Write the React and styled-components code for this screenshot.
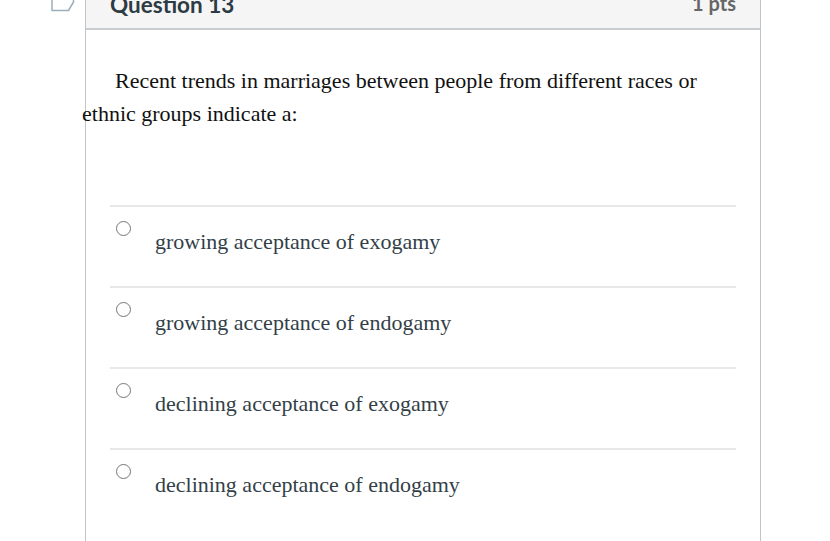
import styled, { createGlobalStyle } from "styled-components";

const GlobalStyle = createGlobalStyle`
  html, body {
    margin: 0;
    padding: 0;
    background: #ffffff;
    overflow: hidden;
  }
`;

const answers = [
  "growing acceptance of exogamy",
  "growing acceptance of endogamy",
  "declining acceptance of exogamy",
  "declining acceptance of endogamy",
];

export default function App() {
  return (
    <>
      <GlobalStyle />
      <Page>
        <FlagCol>
          <svg width="24" height="28" viewBox="0 0 24 28">
            <path
              d="M1 0 V26.5 H17.5 L22.5 18 V0"
              fill="none"
              stroke="#9aafbd"
              strokeWidth="1.5"
              strokeLinejoin="round"
            />
          </svg>
        </FlagCol>
        <Card>
          <Header>
            <Title>Question 13</Title>
            <Points>1 pts</Points>
          </Header>
          <Body>
            <QuestionText>
              Recent trends in marriages between people from different races or
              ethnic groups indicate a:
            </QuestionText>
            <Answers>
              {answers.map((a) => (
                <Answer key={a}>
                  <Radio />
                  <AnswerText>{a}</AnswerText>
                </Answer>
              ))}
            </Answers>
          </Body>
        </Card>
      </Page>
    </>
  );
}

const Page = styled.div`
  display: flex;
  align-items: flex-start;
  gap: 10px;
  padding-left: 51px;
  margin-top: -16px;
  height: 600px;
`;

const FlagCol = styled.div`
  width: 24px;
  height: 28px;
  svg {
    display: block;
  }
`;

const Card = styled.div`
  width: 674px;
  border-left: 1px solid #c4c4c4;
  border-right: 1px solid #c4c4c4;
  min-height: 640px;
`;

const Header = styled.div`
  display: flex;
  justify-content: space-between;
  align-items: flex-start;
  height: 44px;
  padding: 0 24px;
  background: #f5f5f5;
  border-bottom: 2px solid #c7cdd1;
  font-family: Lato, "Liberation Sans", sans-serif;
  font-weight: 700;
`;

const Title = styled.div`
  font-size: 22.5px;
  line-height: 28px;
  color: #2d3b45;
  margin-top: 7px;
`;

const Points = styled.div`
  font-size: 20px;
  line-height: 24px;
  color: #666;
  margin-top: 7px;
`;

const Body = styled.div`
  padding-top: 34px;
`;

const QuestionText = styled.p`
  margin: 0 0 75px -4px;
  text-indent: 33px;
  width: 650px;
  font-family: "Liberation Serif", "Times New Roman", serif;
  font-size: 22px;
  line-height: 33px;
  color: #111;
`;

const Answers = styled.div`
  margin: 0 24px;
`;

const Answer = styled.div`
  display: flex;
  align-items: flex-start;
  gap: 24px;
  height: 79px;
  padding-left: 6px;
  border-top: 2px solid #e8e8e8;
`;

const Radio = styled.span`
  flex: none;
  width: 13px;
  height: 13px;
  margin-top: 14px;
  border: 1px solid #767676;
  border-radius: 50%;
  background: #fff;
`;

const AnswerText = styled.div`
  margin-top: 23px;
  font-family: "Liberation Serif", "Times New Roman", serif;
  font-size: 22px;
  line-height: 24px;
  color: #333f48;
`;
